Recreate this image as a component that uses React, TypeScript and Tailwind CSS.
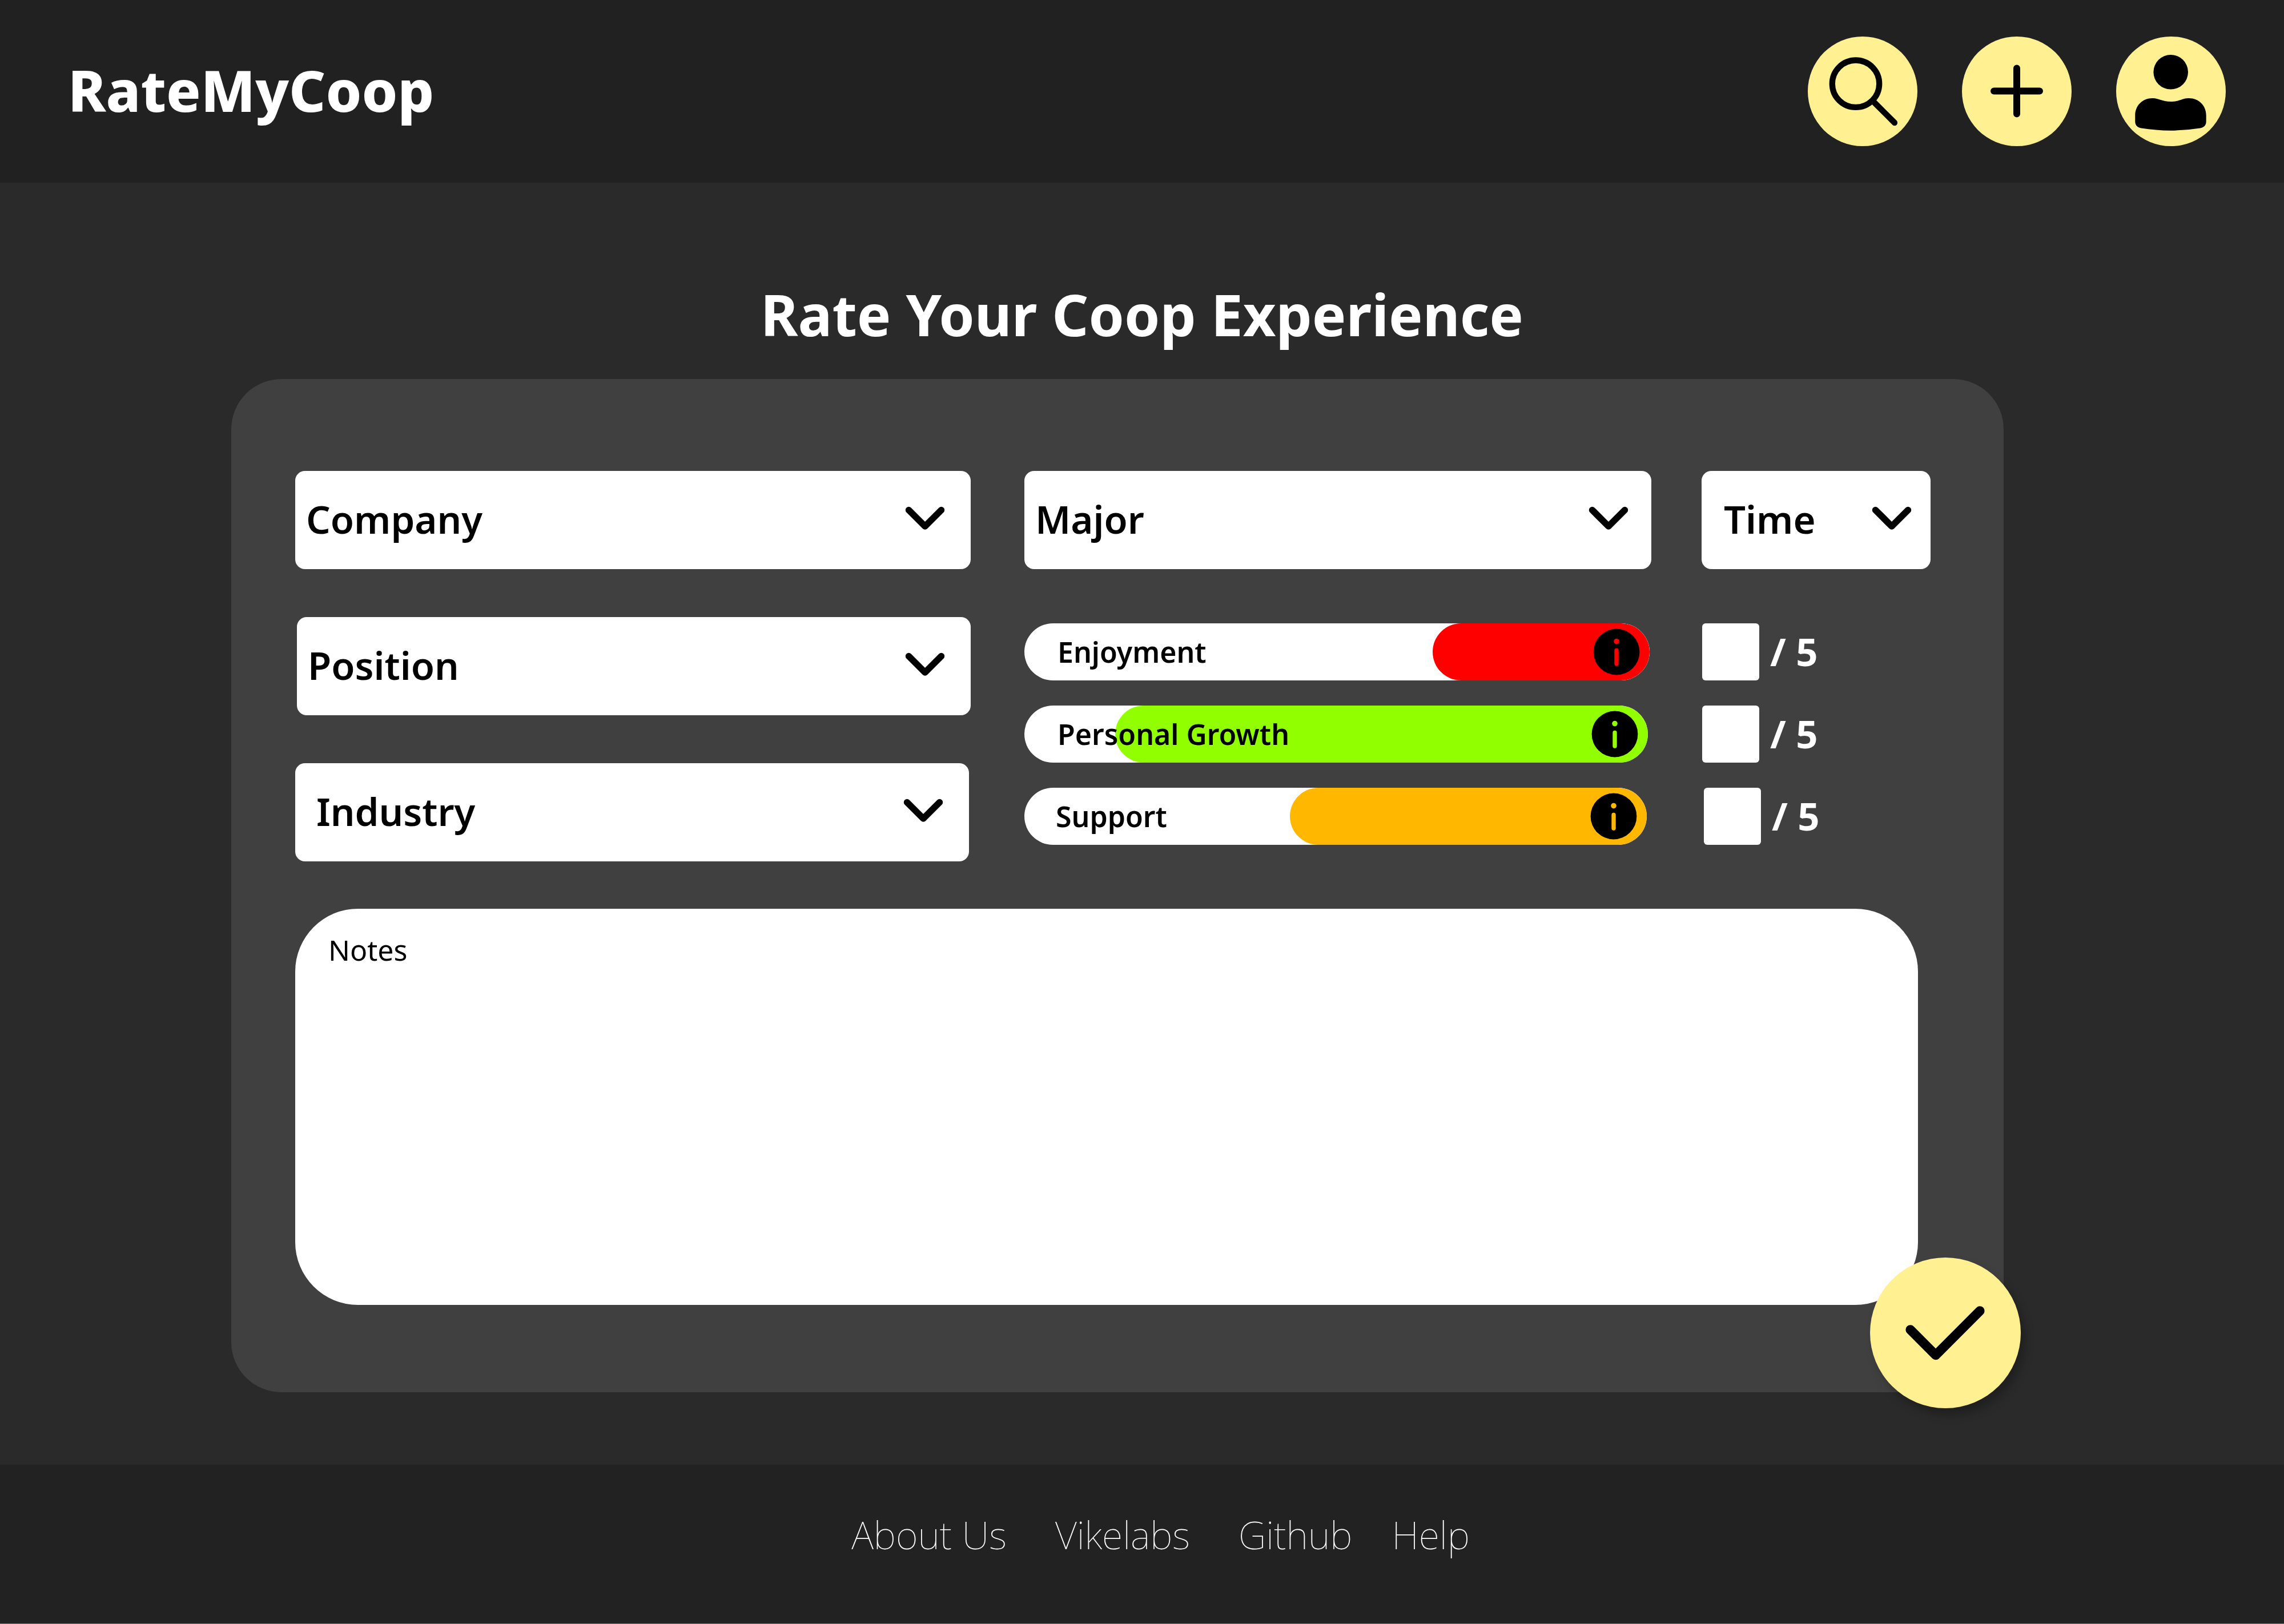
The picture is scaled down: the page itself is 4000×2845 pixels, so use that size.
import type { ReactNode } from "react";

const selectText = "text-[67px] leading-[92px] font-semibold text-black";

function Chevron({ className }: { className: string }) {
  return (
    <svg
      aria-hidden="true"
      viewBox="0 0 70 42"
      className={`pointer-events-none absolute top-[62px] h-[42px] w-[70px] ${className}`}
      fill="none"
      stroke="black"
      strokeWidth="11.5"
      strokeLinecap="round"
      strokeLinejoin="round"
    >
      <path d="M6.500 6.500 35 35 63.500 6.500" />
    </svg>
  );
}

function SelectBox({ label, box = "", pad, chevron = "right-[45px]" }: { label: string; box?: string; pad: string; chevron?: string }) {
  return (
    <div className={`relative h-[172px] ${box}`}>
      <select
        aria-label={label}
        className={`h-full w-full appearance-none rounded-[17px] bg-white pb-[4px] ${pad} ${selectText}`}
      >
        <option>{label}</option>
      </select>
      <Chevron className={chevron} />
    </div>
  );
}

function Rating({ label, pad, track, fill, color, score = "" }: { label: string; pad: string; track: string; fill: number; color: string; score?: string }) {
  const id = label.toLowerCase().replace(" ", "-");
  return (
    <div className="flex h-[100px] items-center">
      <div className="w-[1187px] shrink-0">
        <div className={`relative h-[100px] overflow-hidden rounded-full bg-white ${track}`}>
          <div className={`absolute inset-y-0 right-0 rounded-full ${color}`} style={{ width: `${fill}%` }} />
          <label htmlFor={id} className={`relative block text-[50px] leading-[100px] font-semibold text-black ${pad}`}>
            {label}
          </label>
          <button type="button" aria-label={`About ${label}`} className="absolute top-[9px] right-[17px] size-[82px]">
            <svg aria-hidden="true" viewBox="0 0 82 82" className={`size-full rounded-full ${color}`}>
              <circle cx="41" cy="41" r="40.4" fill="black" />
              <circle cx="41" cy="22.6" r="4.8" className="fill-current" />
              <path d="M41 38.4V62" stroke="currentColor" strokeWidth="7.4" strokeLinecap="round" />
            </svg>
          </button>
        </div>
      </div>
      <div className={`flex items-center gap-[19px] ${score}`}>
        <input id={id} type="text" inputMode="numeric" className="size-[100px] rounded-[6px] bg-white text-center text-[50px] text-black" />
        <span className="pb-[3px] text-[67px] leading-[92px] font-bold text-white">/ 5</span>
      </div>
    </div>
  );
}

function RoundButton({ label, children }: { label: string; children: ReactNode }) {
  return (
    <button type="button" aria-label={label} className="size-48 rounded-full bg-[#fff091]">
      <svg aria-hidden="true" viewBox="0 0 192 192" className="size-full">
        {children}
      </svg>
    </button>
  );
}

export default function App() {
  return (
    <div className="flex min-h-screen flex-col bg-[#2a2a2a] font-['Noto_Sans',sans-serif]">
      <header className="flex h-[320px] items-center justify-between bg-[#212121] pr-[102px] pl-[119px]">
        <a href="#" className="pb-[6px] text-[100px] leading-[136px] font-extrabold text-white">RateMyCoop</a>
        <nav className="flex gap-[78px]">
          <RoundButton label="Search">
            <circle cx="84" cy="82.7" r="41.2" fill="none" stroke="black" strokeWidth="10.3" />
            <path d="M114 113 152 151" stroke="black" strokeWidth="10.3" strokeLinecap="round" />
          </RoundButton>
          <RoundButton label="Add a rating">
            <path d="M96 55.5V135.5M56 95.5H136" stroke="black" strokeWidth="12" strokeLinecap="round" />
          </RoundButton>
          <RoundButton label="Profile">
            <circle cx="95.7" cy="62.3" r="30.3" />
            <path d="M33.3 138C33.3 121 46 108 64 108C75 108 80 114 95.7 114S116 108 127 108C145 108 157.7 121 157.7 138V149C157.7 156 153 159.500 147 160.500Q95.500 168.800 44 160.500C38 159.500 33.3 156 33.3 149Z" />
          </RoundButton>
        </nav>
      </header>

      <main className="flex grow flex-col pt-[162px] pr-[491px] pb-[127px] pl-[405px]">
        <h1 className="ml-[86px] text-center text-[100px] leading-[136px] font-bold text-white">Rate Your Coop Experience</h1>
        <form className="relative mt-[46px] flex grow flex-col rounded-[88px] bg-[#404040] pt-[161px] pr-[128px] pb-[153px] pl-[112px]">
          <div className="flex justify-between">
            <div className="flex w-[1183px] flex-col gap-[84px]">
              <SelectBox label="Company" pad="pl-[19px]" />
              <SelectBox label="Position" box="ml-[3px]" pad="pl-[19px]" />
              <SelectBox label="Industry" box="mr-[3px]" pad="pl-[37px]" />
            </div>
            <div className="w-[1587px]">
              <div className="flex justify-between">
                <SelectBox label="Major" box="w-[1098px]" pad="pl-[19px]" chevron="right-[40px]" />
                <SelectBox label="Time" box="w-[401px]" pad="pl-[39px]" chevron="right-[33px]" />
              </div>
              <div className="mt-[95px] flex flex-col gap-[44px]">
                <Rating label="Enjoyment" pad="pl-[58px]" track="w-[1095px]" fill={34.7} color="bg-[#ff0000] text-[#ff0000]" />
                <Rating label="Personal Growth" pad="pl-[58px]" track="w-[1092px]" fill={85.4} color="bg-[#91ff00] text-[#91ff00]" />
                <Rating label="Support" pad="pl-[55px]" track="w-[1090px]" fill={57.3} color="bg-[#ffb700] text-[#ffb700]" score="ml-[3px]" />
              </div>
            </div>
          </div>
          <textarea
            aria-label="Notes"
            placeholder="Notes"
            className="mt-[83px] mr-[22px] grow resize-none rounded-[110px] bg-white px-[58px] pt-[38px] text-[50px] leading-[68px] text-black placeholder:text-black"
          />
          <button
            type="submit"
            aria-label="Submit rating"
            className="absolute -right-[30px] -bottom-[28px] size-[264px] rounded-full bg-[#fff091] shadow-[8px_12px_16px_rgba(0,0,0,0.25)]"
          >
            <svg aria-hidden="true" viewBox="0 0 264 264" className="size-full" fill="none" stroke="black" strokeWidth="16.6" strokeLinecap="round" strokeLinejoin="round">
              <path d="M70.7 126.5 115 171 192.3 93.5" />
            </svg>
          </button>
        </form>
      </main>

      <footer className="flex h-[279px] items-center justify-center border-b border-[#777777] bg-[#222222] pb-[34px] pl-[65px] text-[67px] leading-[92px] font-thin text-white">
        <nav className="flex gap-[85px]">
          <a href="#">About Us</a>
          <a href="#">Vikelabs</a>
          <a href="#">Github</a>
          <a href="#" className="-ml-[16px]">Help</a>
        </nav>
      </footer>
    </div>
  );
}
